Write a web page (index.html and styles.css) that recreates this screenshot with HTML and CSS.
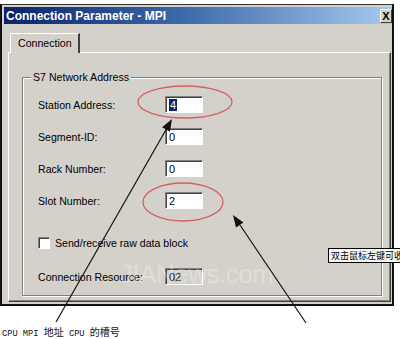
FILE: index.html
```html
<!DOCTYPE html>
<html>
<head>
<meta charset="utf-8">
<link rel="stylesheet" href="styles.css">
</head>
<body>
<div class="page">
  <div class="window">
    <div class="titlebar">
      <span class="title">Connection Parameter - MPI</span>
      <span class="close">X</span>
    </div>
    <div class="body">
      <div class="tabs"><div class="tab">Connection</div></div>
      <div class="panel">
        <div class="group">
          <div class="legend">S7 Network Address</div>
          <div class="row"><span class="label">Station Address:</span><span class="field"><span class="sel">4</span></span></div>
          <div class="row"><span class="label">Segment-ID:</span><span class="field">0</span></div>
          <div class="row"><span class="label">Rack Number:</span><span class="field">0</span></div>
          <div class="row"><span class="label">Slot Number:</span><span class="field">2</span></div>
          <div class="row check"><span class="box"></span><span class="checklabel">Send/receive raw data block</span></div>
          <div class="row last"><span class="label">Connection Resource:</span><span class="field disabled">02</span></div>
        </div>
      </div>
    </div>
  </div>
  <div class="caption"><span class="lat">CPU MPI </span>地址<span class="lat"> CPU </span>的槽号</div>

  <div class="watermark">JIANews.com</div>

  <svg class="overlay" width="400" height="339" viewBox="0 0 400 339">
    <ellipse cx="185" cy="102" rx="47" ry="16" fill="none" stroke="#d46060" stroke-width="1.3"/>
    <ellipse cx="183" cy="202" rx="40" ry="19" fill="none" stroke="#d46060" stroke-width="1.3"/>
    <line x1="56" y1="322" x2="167" y2="128" stroke="#111" stroke-width="1.2"/>
    <polygon points="172,119 169.96,131.65 162.14,127.19" fill="#111"/>
    <line x1="306" y1="323" x2="240" y2="225" stroke="#111" stroke-width="1.2"/>
    <polygon points="233,215 243.45,222.42 235.99,227.46" fill="#111"/>
  </svg>

  <div class="tooltip">双击鼠标左键可收起</div>
</div>
</body>
</html>
```

FILE: styles.css
```css
html, body {
  margin: 0;
  padding: 0;
  background: #ffffff;
}

.page {
  position: relative;
  width: 400px;
  height: 339px;
  overflow: hidden;
  font-family: "Liberation Sans", Arial, sans-serif;
  font-size: 10.6px;
  color: #000;
}

.window {
  box-sizing: border-box;
  margin-top: 4px;
  width: 394px;
  height: 302px;
  background: #d4d1cb;
  border-left: 2px solid #111;
  border-right: 2px solid #111;
  border-bottom: 2px solid #111;
  border-top: 1px solid #333;
  padding: 2px 0 0 2px;
  display: flex;
  flex-direction: column;
}

.titlebar {
  height: 17px;
  display: flex;
  align-items: center;
  justify-content: space-between;
  background: linear-gradient(to right, #0a246a 0%, #3a68a8 45%, #a6caf0 100%);
  padding-left: 2px;
}

.title {
  color: #fff;
  font-weight: bold;
  font-size: 12px;
  white-space: nowrap;
}

.close {
  box-sizing: border-box;
  width: 12px;
  height: 14px;
  background: #d4d1cb;
  border-top: 1px solid #fff;
  border-left: 1px solid #fff;
  border-right: 1px solid #404040;
  border-bottom: 1px solid #404040;
  font-weight: bold;
  font-size: 11px;
  line-height: 12px;
  text-align: center;
  color: #000;
}

.body {
  padding-top: 9px;
  display: flex;
  flex-direction: column;
}

.tabs {
  display: flex;
  padding-left: 6px;
  position: relative;
  z-index: 1;
  margin-bottom: -1px;
}

.tab {
  box-sizing: border-box;
  width: 70px;
  height: 20px;
  padding-left: 7px;
  padding-top: 3px;
  background: #d4d1cb;
  border-top: 1px solid #fff;
  border-left: 1px solid #fff;
  border-right: 2px solid #404040;
  white-space: nowrap;
}

.panel {
  box-sizing: border-box;
  margin-left: 4px;
  width: 383px;
  height: 250px;
  border-top: 1px solid #fff;
  border-left: 1px solid #fff;
  border-right: 1px solid #404040;
  border-bottom: 1px solid #404040;
  box-shadow: inset -1px -1px 0 #808080;
  padding: 24px 8px 0 13px;
}

.group {
  position: relative;
  box-sizing: border-box;
  height: 219px;
  border: 1px solid #808080;
  box-shadow: inset 1px 1px 0 #fff, 1px 1px 0 #fff;
  padding: 18px 0 0 15px;
  display: flex;
  flex-direction: column;
  gap: 15px;
}

.legend {
  position: absolute;
  top: -7px;
  left: 8px;
  padding: 0 2px;
  line-height: 13px;
  background: #d4d1cb;
}

.row {
  height: 17px;
  display: flex;
  align-items: center;
}

.label {
  width: 127px;
  white-space: nowrap;
}

.field {
  box-sizing: border-box;
  width: 38px;
  height: 17px;
  background: #fff;
  border-top: 1px solid #808080;
  border-left: 1px solid #808080;
  border-bottom: 1px solid #fff;
  border-right: 1px solid #fff;
  box-shadow: inset 1px 1px 0 #404040;
  padding: 1px 0 0 3px;
  font-size: 11px;
  line-height: 14px;
}

.field.disabled {
  background: #d4d1cb;
}

.sel {
  background: #0a246a;
  color: #fff;
  padding: 0 1px;
}

.check {
  margin-top: 10px;
}

.last {
  margin-top: 2px;
}

.box {
  box-sizing: border-box;
  width: 12px;
  height: 12px;
  background: #fff;
  border-top: 1px solid #808080;
  border-left: 1px solid #808080;
  border-bottom: 1px solid #fff;
  border-right: 1px solid #fff;
  box-shadow: inset 1px 1px 0 #404040;
  margin-right: 5px;
}

.checklabel {
  white-space: nowrap;
}

.caption {
  margin-top: 20px;
  padding-left: 2px;
  height: 12px;
  line-height: 12px;
  font-family: "Noto Sans CJK SC", "Liberation Mono", monospace;
  font-size: 10px;
  white-space: nowrap;
  color: #111;
}

.lat {
  font-family: "Liberation Mono", monospace;
  font-size: 8.7px;
}

.watermark {
  position: absolute;
  left: 120px;
  top: 259px;
  font-size: 26px;
  color: rgba(255, 255, 255, 0.3);
  white-space: nowrap;
  letter-spacing: -0.5px;
  pointer-events: none;
}

.overlay {
  position: absolute;
  left: 0;
  top: 0;
  pointer-events: none;
}

.tooltip {
  position: absolute;
  left: 328px;
  top: 248px;
  height: 13px;
  line-height: 13px;
  border: 1px solid #000;
  background: #f6f6f2;
  padding: 0 2px;
  font-family: "Noto Sans CJK SC", sans-serif;
  font-size: 9px;
  white-space: nowrap;
}
```
